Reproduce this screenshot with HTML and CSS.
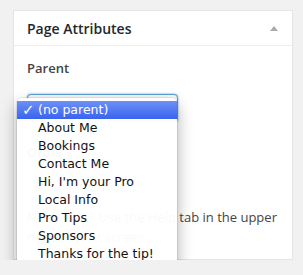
FILE: index.html
```html
<!DOCTYPE html>
<html lang="en">
<head>
    <meta charset="UTF-8">
    <title>Page Attributes</title>
    <link rel="stylesheet" href="styles.css">
</head>
<body>
    <div class="postbox">
        <div class="postbox-header">
            <h2>Page Attributes</h2>
            <span class="toggle"></span>
        </div>
        <div class="inside">
            <p class="label">Parent</p>
            <div class="select-wrap">
                <div class="select">(no parent)</div>

                <ul class="menu">
                    <li class="selected"><span class="check">&#10003;</span>(no parent)</li>
                    <li>About Me</li>
                    <li>Bookings</li>
                    <li>Contact Me</li>
                    <li>Hi, I'm your Pro</li>
                    <li>Local Info</li>
                    <li>Pro Tips</li>
                    <li>Sponsors</li>
                    <li>Thanks for the tip!</li>
                </ul>
            </div>

            <p class="label">Order</p>
            <div class="order-input">0</div>

            <p class="help">Need help? Use the Help tab in the upper right of your screen.</p>
        </div>
    </div>
</body>
</html>
```

FILE: styles.css
```css
* {
    margin: 0;
    padding: 0;
    box-sizing: border-box;
}

body {
    font-family: "Open Sans", sans-serif;
    background: #f1f1f1;
    color: #444;
    padding: 10px 10px 0 13px;
}

.postbox {
    width: 280px;
    height: 250px;
    background: #fff;
    border: 1px solid #e5e5e5;
    box-shadow: 0 1px 1px rgba(0, 0, 0, 0.04);
}

.postbox-header {
    height: 35px;
    border-bottom: 1px solid #eee;
    display: flex;
    align-items: center;
    justify-content: space-between;
    padding: 0 14px 0 13px;
}

.postbox-header h2 {
    font-size: 14px;
    font-weight: 600;
    color: #23282d;
    padding-top: 1px;
}

.toggle {
    width: 0;
    height: 0;
    border-left: 4px solid transparent;
    border-right: 4px solid transparent;
    border-bottom: 5px solid #aaa;
    margin-top: 1px;
}

.inside {
    padding: 12px 13px;
}

.label {
    font-size: 13px;
    font-weight: 600;
    color: #444;
    line-height: 20px;
    margin-bottom: 16px;
}

.select-wrap {
    position: relative;
    height: 28px;
    width: 151px;
    margin-bottom: 20px;
}

.select {
    height: 28px;
    border: 1px solid #5b9dd9;
    border-radius: 4px;
    box-shadow: 0 0 2px rgba(30, 140, 190, 0.8);
    background: #f7f7f7;
    font-size: 13px;
    padding: 4px 8px;
}

.menu {
    position: absolute;
    left: -10px;
    top: 4px;
    width: 160px;
    list-style: none;
    padding: 3px 0 5px;
    background: rgba(255, 255, 255, 0.97);
    border-radius: 5px;
    box-shadow: 0 7px 16px rgba(0, 0, 0, 0.33), 0 0 0 1px rgba(0, 0, 0, 0.07);
    font-family: "DejaVu Sans", sans-serif;
    font-size: 12.5px;
    color: #111;
    z-index: 2;
}

.menu li {
    height: 18px;
    line-height: 18px;
    padding-left: 21px;
    position: relative;
}

.menu li.selected {
    background: linear-gradient(#6d90f7, #3a63ee);
    color: #fff;
}

.check {
    position: absolute;
    left: 5px;
    font-size: 15px;
    font-weight: bold;
}

.order-input {
    width: 44px;
    height: 28px;
    border: 1px solid #ddd;
    box-shadow: inset 0 1px 2px rgba(0, 0, 0, 0.07);
    font-size: 13px;
    padding: 4px 8px;
    margin-top: -8px;
    margin-bottom: 9px;
}

.help {
    font-size: 13px;
    line-height: 20px;
    color: #444;
}
```
